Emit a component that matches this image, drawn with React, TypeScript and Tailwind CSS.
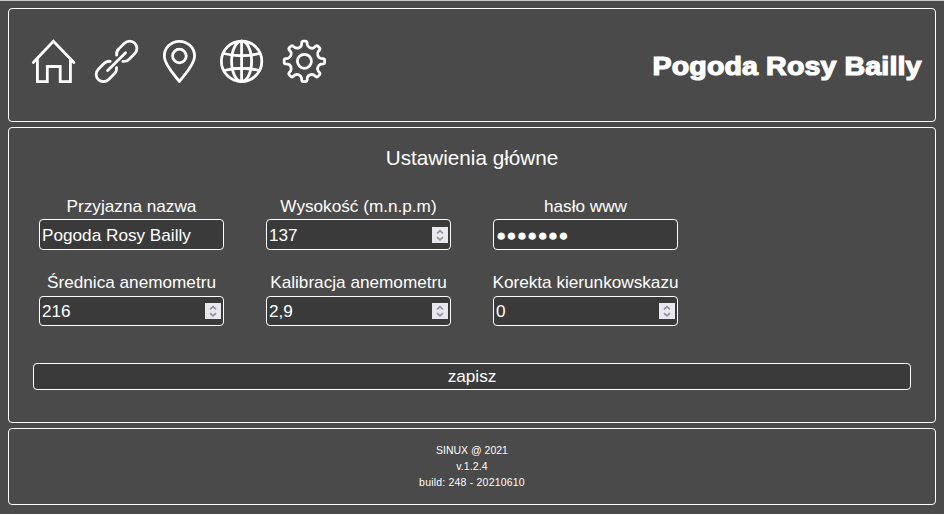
import type { ReactNode } from "react";

function Icon({ children }: { children: ReactNode }) {
  return (
    <svg
      viewBox="0 0 43 45"
      className="h-[45px] w-[43px] overflow-visible"
      fill="none"
      stroke="#fff"
      strokeWidth={2.8}
      strokeLinecap="round"
      strokeLinejoin="round"
    >
      {children}
    </svg>
  );
}

const LINK = "M-10 -4.4A7.3 7.3 0 0 1 -4 -7.3H4A7.3 7.3 0 0 1 4 7.3H-4A7.3 7.3 0 0 1 -10 4.4";

function polar(radius: number, degrees: number) {
  const a = (degrees * Math.PI) / 180;
  return `${(21.4 + radius * Math.sin(a)).toFixed(2)} ${(22.3 - radius * Math.cos(a)).toFixed(2)}`;
}

function gearPath() {
  let d = "";
  for (let k = 0; k < 8; k++) {
    const a = k * 45;
    d += `${k ? "L" : "M"}${polar(16.8, a - 10)}L${polar(19.2, a - 8)}Q${polar(20.3, a - 7)} ${polar(20.3, a - 4)}L${polar(20.3, a + 4)}Q${polar(20.3, a + 7)} ${polar(19.2, a + 8)}L${polar(16.8, a + 10)}C${polar(14.6, a + 14)} ${polar(13.8, a + 31)} ${polar(16.8, a + 35)}`;
  }
  return d + "Z";
}

function Field({ label, value, spinner, lower }: { label: string; value: string; spinner?: boolean; lower?: boolean }) {
  return (
    <div className="flex w-[185px] flex-col items-center">
      <label className="whitespace-nowrap leading-5">{label}</label>
      <div
        className={`flex w-full items-center justify-between rounded border border-white bg-[#3a3a3a] pr-0.5 pl-[2px] ${lower ? "mt-1 h-[30px]" : "mt-[3px] h-[31px]"}`}
      >
        <span className="leading-6">{value}</span>
        {spinner && (
          <span className="flex size-4 items-center justify-center bg-[#e9e9ed]">
            <svg viewBox="0 0 16 16" className="size-4" fill="none" stroke="#8f8f9d" strokeWidth={1.6}>
              <path d="M5 6.4 8 3.6l3 2.8M5 10.1 8 12.9l3-2.8" />
            </svg>
          </span>
        )}
      </div>
    </div>
  );
}

export default function App() {
  return (
    <div className="flex h-[514px] w-[944px] flex-col gap-[5px] border-t border-[#c8ccc8] bg-[#4a4a4a] px-2 pt-[7px] font-['Liberation_Sans',Arial,sans-serif] text-[17.18px] text-white">
      <header className="flex h-[114px] shrink-0 items-start justify-between rounded border border-white pr-[13px] pl-[23px]">
        <nav className="mt-[30px] flex gap-[19.8px]">
          <Icon>
            <path d="M1.3 23.5 21.4 2.3 41.9 23.5M5.4 20V42.6H15.3V27.5H28.2V42.6H38.4V20" strokeLinejoin="miter" />
          </Icon>
          <Icon>
            <path transform="translate(31.8 12.2) rotate(-45)" d={LINK} />
            <path transform="translate(11.3 32.5) rotate(135)" d={LINK} />
            <path d="M12.6 31.5 30.6 13.7" />
          </Icon>
          <Icon>
            <path d="M21.4 42.5C17 36.5 6.3 26 6.3 17.3C6.3 8.8 13 2.3 21.4 2.3S36.6 8.8 36.6 17.3C36.6 26 25.8 36.5 21.4 42.5Z" />
            <circle cx={21.4} cy={17} r={6.8} />
          </Icon>
          <Icon>
            <circle cx={21.6} cy={22.3} r={20.2} />
            <ellipse cx={21.6} cy={22.3} rx={10} ry={20.2} />
            <path d="M21.6 2.1V42.5M4 14.5Q21.6 19 39.2 14.5M4 31.5Q21.6 27 39.2 31.5" />
          </Icon>
          <Icon>
            <path d={gearPath()} />
            <circle cx={21.4} cy={22.3} r={7} />
          </Icon>
        </nav>
        <h1 className="mt-[41px] origin-right scale-x-110 text-[26px] leading-8 font-bold tracking-[0.1px] whitespace-nowrap [-webkit-text-stroke:1.2px_white]">
          Pogoda Rosy Bailly
        </h1>
      </header>

      <main className="h-[296px] shrink-0 rounded border border-white px-6">
        <h2 className="mt-[18px] text-center text-[20.7px] leading-6">Ustawienia główne</h2>
        <div className="mt-[26px] ml-[6px] grid grid-cols-[185px_185px_185px] gap-x-[42px] gap-y-[22px]">
          <Field label="Przyjazna nazwa" value="Pogoda Rosy Bailly" />
          <Field label="Wysokość (m.n.p.m)" value="137" spinner />
          <Field label="hasło www" value="●●●●●●●" />
          <Field label="Średnica anemometru" value="216" spinner lower />
          <Field label="Kalibracja anemometru" value="2,9" spinner lower />
          <Field label="Korekta kierunkowskazu" value="0" spinner lower />
        </div>
        <button className="mt-[37px] block h-[27px] w-[878px] rounded border border-white bg-[#3a3a3a] leading-[25px]">zapisz</button>
      </main>

      <footer className="h-[77px] shrink-0 rounded border border-white pt-[13px] text-center text-[10.5px] leading-4">
        <p>SINUX @ 2021</p>
        <p className="tracking-[0.1px]">v.1.2.4</p>
        <p className="tracking-[0.2px]">build: 248 - 20210610</p>
      </footer>
    </div>
  );
}
